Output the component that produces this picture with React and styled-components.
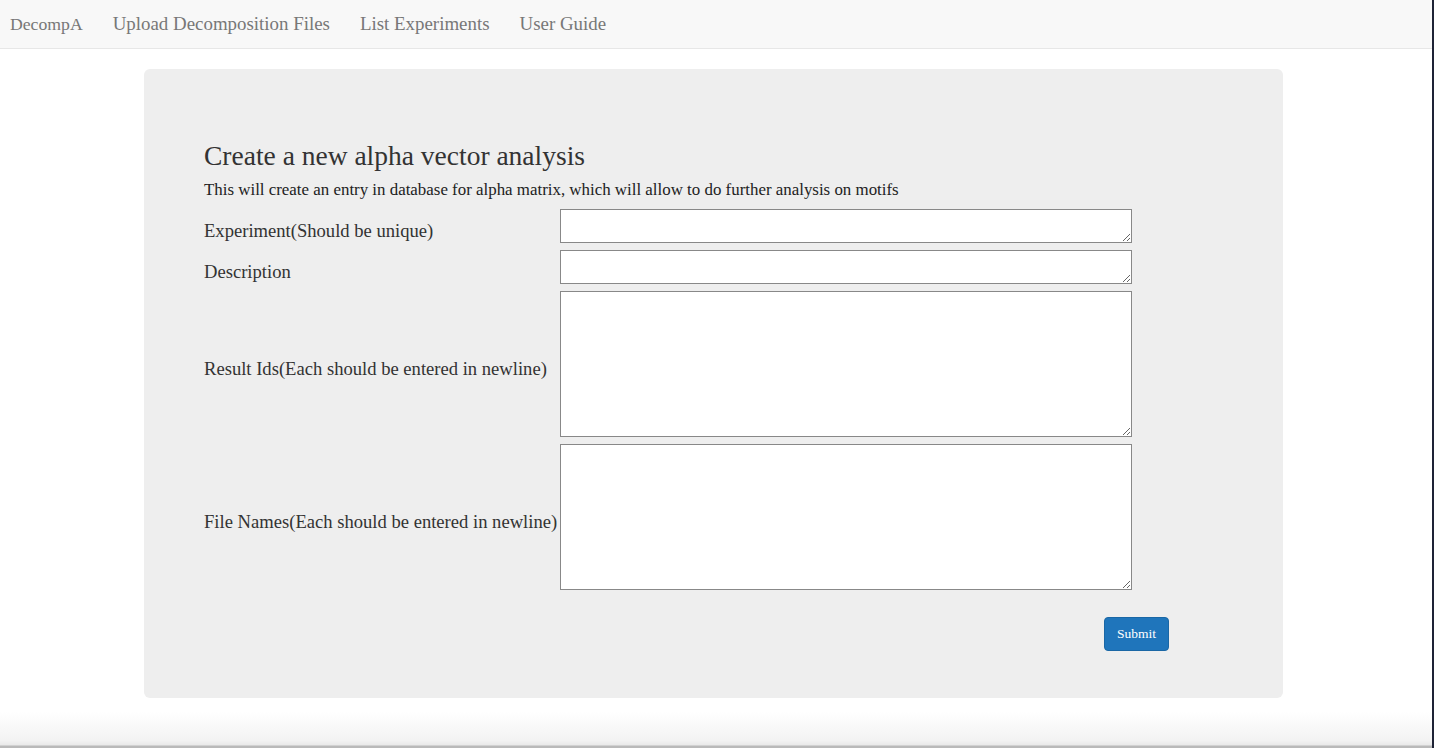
import React from 'react';
import styled, { createGlobalStyle } from 'styled-components';

const GlobalStyle = createGlobalStyle`
  html, body {
    margin: 0;
    padding: 0;
  }
  html {
    background: #1e2336;
  }
  body {
    width: 1432px;
    min-height: 748px;
    font-family: "Liberation Serif", "DejaVu Serif", serif;
    color: #333;
    background: linear-gradient(
      to bottom,
      #fff 0,
      #fff 712px,
      #f3f3f3 740px,
      #e9e9e9 745px,
      #b9b9b9 746px,
      #b9b9b9 748px
    );
  }
  * {
    box-sizing: border-box;
  }
`;

const Navbar = styled.nav`
  display: flex;
  align-items: center;
  gap: 30px;
  height: 49px;
  padding: 0 10px;
  background-color: #f8f8f8;
  border-bottom: 1px solid #e7e7e7;
`;

const NavLink = styled.a`
  font-size: ${(p) => (p.$brand ? '17.7px' : '18.9px')};
  color: #777;
  text-decoration: none;
  line-height: 20px;
  cursor: pointer;
`;

const Container = styled.div`
  width: 1139px;
  margin: 20px 0 0 144px;
`;

const Jumbotron = styled.div`
  height: 629px;
  padding: 71px 60px 0 60px;
  background-color: #eee;
  border-radius: 6px;
`;

const Title = styled.h1`
  margin: 0;
  font-size: 27.5px;
  font-weight: 400;
  line-height: 32px;
  color: #333;
`;

const Lead = styled.p`
  margin: 8px 0 9px;
  font-size: 16.9px;
  line-height: 20px;
  color: #222;
`;

const FormGrid = styled.div`
  display: grid;
  grid-template-columns: 356px 572px;
  row-gap: 7px;
`;

const Label = styled.label`
  display: flex;
  align-items: center;
  padding-top: 9px;
  white-space: nowrap;
  font-size: 18.6px;
  color: #333;
`;

const TextArea = styled.textarea`
  display: block;
  width: 572px;
  height: ${(p) => (p.$tall ? '146px' : '34px')};
  margin: 0;
  border: 1px solid #888;
  background: #fff;
  font-family: inherit;
  font-size: 14px;
  padding: 2px;
`;

const Actions = styled.div`
  display: flex;
  justify-content: flex-end;
  width: 965px;
  margin-top: 27px;
`;

const SubmitButton = styled.button`
  width: 65px;
  height: 34px;
  padding: 0;
  border: 1px solid #1a67a5;
  border-radius: 4px;
  background-color: #1f75bb;
  color: #fff;
  font-family: inherit;
  font-size: 13.5px;
  cursor: pointer;
`;

const fields = [
  { id: 'experiment', label: 'Experiment(Should be unique)' },
  { id: 'description', label: 'Description' },
  { id: 'results', label: 'Result Ids(Each should be entered in newline)', tall: true },
  { id: 'files', label: 'File Names(Each should be entered in newline)', tall: true },
];

export default function App() {
  return (
    <>
      <GlobalStyle />
      <Navbar>
        <NavLink $brand>DecompA</NavLink>
        <NavLink>Upload Decomposition Files</NavLink>
        <NavLink>List Experiments</NavLink>
        <NavLink>User Guide</NavLink>
      </Navbar>
      <Container>
        <Jumbotron>
          <Title>Create a new alpha vector analysis</Title>
          <Lead>
            This will create an entry in database for alpha matrix, which will allow to do further
            analysis on motifs
          </Lead>
          <FormGrid>
            {fields.map((f) => (
              <React.Fragment key={f.id}>
                <Label htmlFor={f.id}>{f.label}</Label>
                <TextArea id={f.id} $tall={f.tall} />
              </React.Fragment>
            ))}
          </FormGrid>
          <Actions>
            <SubmitButton type="submit">Submit</SubmitButton>
          </Actions>
        </Jumbotron>
      </Container>
    </>
  );
}
